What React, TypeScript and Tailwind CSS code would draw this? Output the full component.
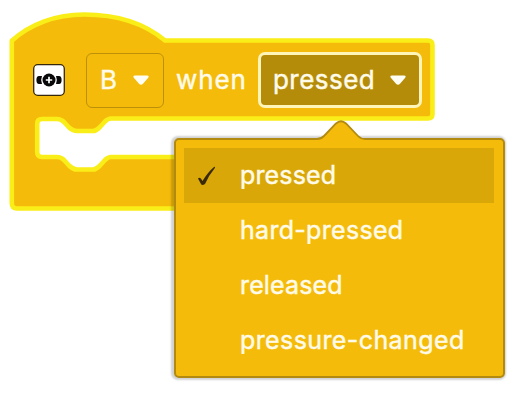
const font = '[font-family:Inter,sans-serif] font-normal [-webkit-text-stroke:0.450px_#fffbe8]';

const options = [
  { label: 'pressed', spacing: 'tracking-[0.150px]' },
  { label: 'hard-pressed', spacing: 'tracking-[0.300px]' },
  { label: 'released', spacing: 'tracking-[0.150px]' },
  { label: 'pressure-changed', spacing: 'tracking-[0.400px]' },
];

function Caret() {
  return (
    <svg className="h-3 w-[18px] shrink-0" viewBox="0 0 18 12">
      <path d="M3 1.500Q0.500 1.500 1.800 3.700L7 9.700Q9 12 11 9.700L16.200 3.700Q17.500 1.500 15 1.500Z" fill="#fffef4" />
    </svg>
  );
}

function HatBlock() {
  return (
    <svg className="absolute inset-0 h-[403px] w-[521px]" viewBox="0 0 521 403">
      <path
        d="M11.800 40.800C30 24 56 14.500 84 14.500C116 14.500 144 23 165 40.500H428Q432.500 40.500 432.500 45V114Q432.500 118.500 428 118.500H111Q108 118.500 105 121.500L100 127Q96 131 93 131H77Q73 131 69 127.500L64 122Q61 119 57 119H42Q37.200 119 37.200 124V152Q37.200 157 42 157H57Q61 157 64 160L69 165.500Q73 169.500 77 169.500H93Q96 169.500 100 165.500L105 160Q108 157 111 157H428V208.500H17Q11.800 208.500 11.800 203Z"
        fill="#f4bb0b"
        stroke="#faee18"
        strokeWidth="4.600"
        strokeLinejoin="round"
      />
    </svg>
  );
}

function ButtonIcon() {
  return (
    <svg className="h-8 w-8 shrink-0" viewBox="0 0 32 32">
      <rect x="0.700" y="0.700" width="30.600" height="30.600" rx="4" fill="white" stroke="#35270a" strokeWidth="1.300" />
      <path d="M9 12H6Q3.400 12 3.400 16T6 20H9Q7.300 16 9 12ZM23 12H26Q28.600 12 28.600 16T26 20H23Q24.700 16 23 12Z" fill="#090909" />
      <circle cx="16" cy="16" r="6.500" fill="#090909" />
      <path d="M16 12.800V19.200M12.800 16H19.200" stroke="white" strokeWidth="1.700" />
    </svg>
  );
}

function Menu() {
  return (
    <div className="absolute left-[174px] top-[138px] h-[240px] w-[331px] rounded-[5px] border-2 border-[#b28a10] bg-[#f4bb0b] px-2 pt-2 shadow-[-1px_0_2px_2px_#0000002e]">
      <svg className="absolute left-[139px] top-[-21px] h-6 w-[52px]" viewBox="0 0 52 24">
        <path d="M2 24V20Q6 20 9 17L21 4.500Q26 0 31 4.500L43 17Q46 20 50 20V24Z" fill="#f4bb0b" />
        <path d="M2 20Q6 20 9 17L21 4.500Q26 0 31 4.500L43 17Q46 20 50 20" fill="none" stroke="#b28a10" strokeWidth="1.800" />
      </svg>
      <ul className="relative">
        {options.map(({ label, spacing }, index) => (
          <li key={label} className={`flex h-[55px] w-[310px] items-center text-[25px] leading-none text-[#fffbe8] ${index === 0 ? 'bg-[#d9a808]' : ''}`}>
            <span className="flex w-14 shrink-0 pl-3">
              {index === 0 && (
                <svg className="h-6 w-6" viewBox="0 0 24 24">
                  <path d="M2 14.500Q4 12 6.500 17Q12 8 18 3Q20 2 18.500 4.500Q13 11 9 20Q6 22 5 20Z" fill="#3a2905" />
                </svg>
              )}
            </span>
            <span className={`whitespace-nowrap ${spacing}`}>{label}</span>
          </li>
        ))}
      </ul>
    </div>
  );
}

export default function App() {
  return (
    <main className={`relative h-[403px] w-[521px] overflow-hidden bg-white ${font}`}>
      <HatBlock />
      <div className="relative flex h-[108px] items-end pl-[33px] text-[26px] leading-none text-[#fffbe8]">
        <div className="flex h-[56px] items-center">
          <ButtonIcon />
          <div className="ml-[21px] flex h-[55px] w-[78px] items-center justify-between rounded-[6px] border-[1.500px] border-[#bd900a] pl-[13px] pr-[13px]">
            <span>B</span>
            <Caret />
          </div>
          <span className="ml-[12px] w-[71px] tracking-[0.9px]">when</span>
          <div className="ml-[11px] flex h-[56px] w-[164px] items-center justify-between rounded-[7px] border-[3px] border-[#fff5b8] bg-[#b58c09] pl-3 pr-3">
            <span className="tracking-[0.450px]">pressed</span>
            <Caret />
          </div>
        </div>
      </div>
      <Menu />
    </main>
  );
}
